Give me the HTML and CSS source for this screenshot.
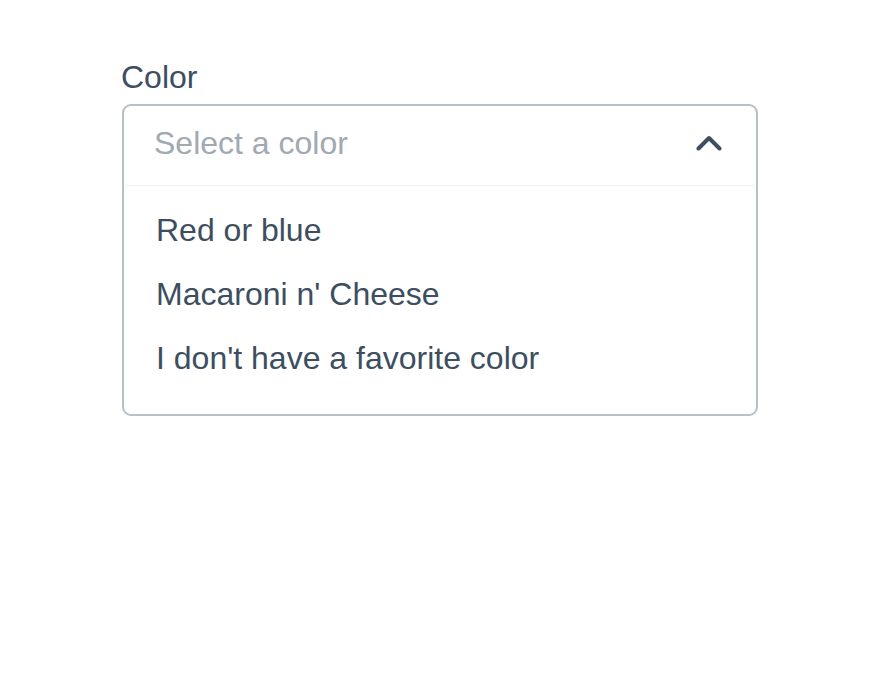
FILE: index.html
```html
<!DOCTYPE html>
<html>
<head>
<meta charset="utf-8">
<link rel="stylesheet" href="styles.css">
</head>
<body>
<div class="field">
  <div class="label">Color</div>
  <div class="select">
    <div class="select-head">
      <span class="placeholder">Select a color</span>
      <svg class="chevron" width="26" height="16" viewBox="0 0 26 16">
        <path d="M2.5 13.5 L13 3 L23.5 13.5" fill="none" stroke="#3d4e60" stroke-width="4" stroke-linecap="round" stroke-linejoin="round"/>
      </svg>
    </div>
    <ul class="options">
      <li class="option">Red or blue</li>
      <li class="option">Macaroni n' Cheese</li>
      <li class="option">I don't have a favorite color</li>
    </ul>
  </div>
</div>
</body>
</html>
```
FILE: styles.css
```css
html, body {
  margin: 0;
  padding: 0;
  background: #ffffff;
}
body {
  font-family: "Liberation Sans", Arial, sans-serif;
  color: #3d4e60;
}
.field {
  padding: 59px 0 0 122px;
  width: 636px;
}
.label {
  font-size: 32px;
  line-height: 37px;
  margin-left: -1px;
}
.select {
  margin-top: 8px;
  border: 2px solid #b7bfc8;
  border-radius: 9px;
  box-sizing: border-box;
  width: 636px;
}
.select-head {
  display: flex;
  align-items: center;
  justify-content: space-between;
  padding: 19px 33px 23px 29px;
  border-bottom: 1px solid #eef1f4;
  margin: 0 1px;
}
.placeholder {
  font-size: 32px;
  line-height: 37px;
  color: #a1a9b2;
}
.chevron {
  display: block;
  margin-top: -1px;
}
.options {
  list-style: none;
  margin: 0;
  padding: 12px 0 24px 32px;
}
.option {
  font-size: 32px;
  line-height: 64px;
  height: 64px;
}
```
